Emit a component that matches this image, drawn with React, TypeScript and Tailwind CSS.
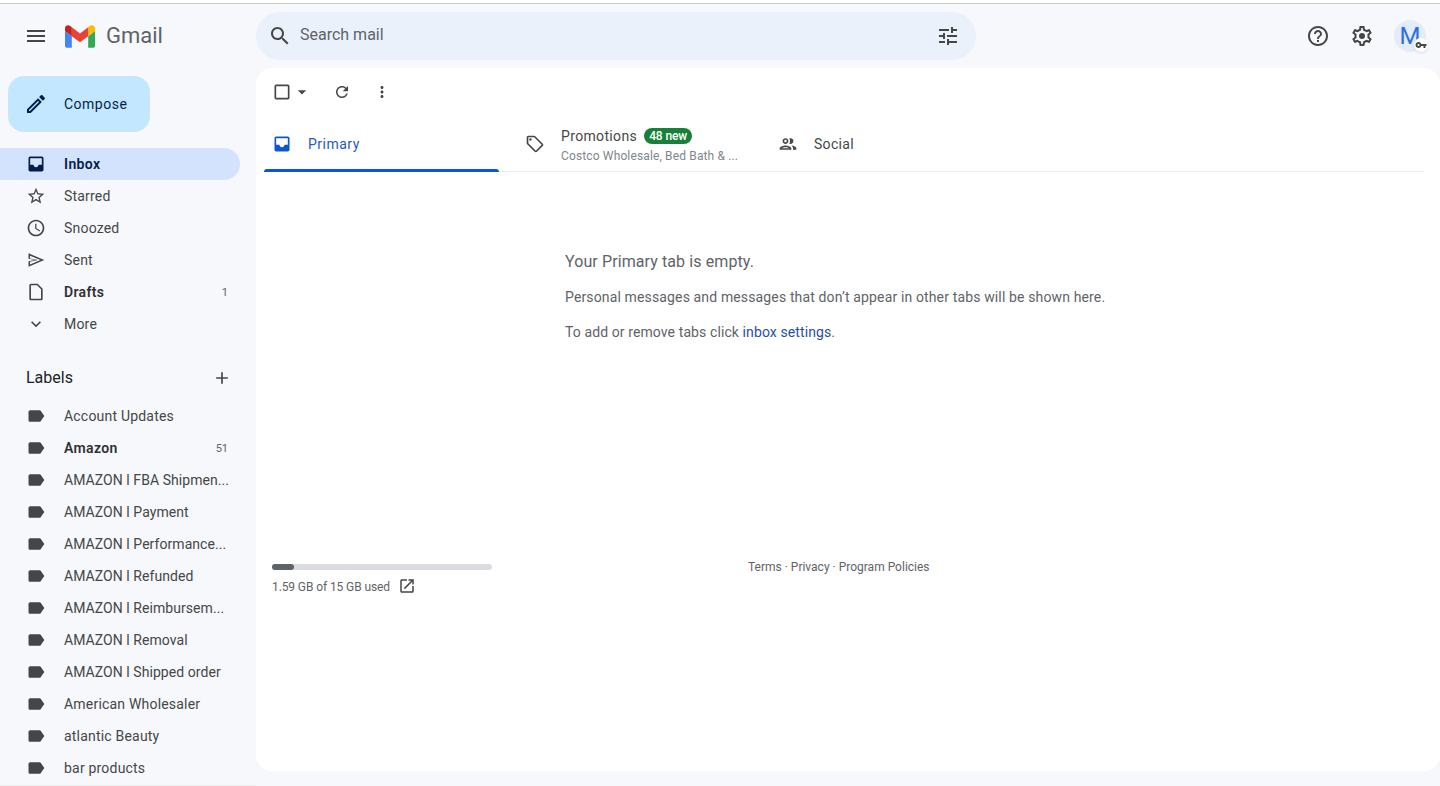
import React from "react";

const ICONS = {
  menu: "M3 18h18v-2H3v2zm0-5h18v-2H3v2zm0-7v2h18V6H3z",
  search: "M15.5 14h-.79l-.28-.27C15.41 12.59 16 11.11 16 9.5 16 5.91 13.09 3 9.5 3S3 5.91 3 9.5 5.91 16 9.5 16c1.61 0 3.09-.59 4.23-1.57l.27.28v.79l5 4.99L20.49 19l-4.99-5zm-6 0C7.01 14 5 11.99 5 9.5S7.01 5 9.5 5 14 7.01 14 9.5 11.99 14 9.5 14z",
  tune: "M3 17v2h6v-2H3zM3 5v2h10V5H3zm10 16v-2h8v-2h-8v-2h-2v6h2zM7 9v2H3v2h4v2h2V9H7zm14 4v-2H11v2h10zm-6-4h2V7h4V5h-4V3h-2v6z",
  help: "M11 18h2v-2h-2v2zm1-16C6.48 2 2 6.48 2 12s4.48 10 10 10 10-4.48 10-10S17.52 2 12 2zm0 18c-4.41 0-8-3.59-8-8s3.59-8 8-8 8 3.59 8 8-3.59 8-8 8zm0-14c-2.21 0-4 1.79-4 4h2c0-1.1.9-2 2-2s2 .9 2 2c0 2-3 1.75-3 5h2c0-2.25 3-2.5 3-5 0-2.21-1.79-4-4-4z",
  settings: "M19.43 12.98c.04-.32.07-.64.07-.98 0-.34-.03-.66-.07-.98l2.11-1.65c.19-.15.24-.42.12-.64l-2-3.46c-.09-.16-.26-.25-.44-.25-.06 0-.12.01-.17.03l-2.49 1c-.52-.4-1.08-.73-1.69-.98l-.38-2.65C14.46 2.18 14.25 2 14 2h-4c-.25 0-.46.18-.49.42l-.38 2.65c-.61.25-1.17.59-1.69.98l-2.49-1c-.06-.02-.12-.03-.18-.03-.17 0-.34.09-.43.25l-2 3.46c-.13.22-.07.49.12.64l2.11 1.65c-.04.32-.07.65-.07.98 0 .33.03.66.07.98l-2.11 1.65c-.19.15-.24.42-.12.64l2 3.46c.09.16.26.25.44.25.06 0 .12-.01.17-.03l2.49-1c.52.4 1.08.73 1.69.98l.38 2.65c.03.24.24.42.49.42h4c.25 0 .46-.18.49-.42l.38-2.65c.61-.25 1.17-.59 1.69-.98l2.49 1c.06.02.12.03.18.03.17 0 .34-.09.43-.25l2-3.46c.12-.22.07-.49-.12-.64l-2.11-1.65zm-1.98-1.71c.04.31.05.52.05.73 0 .21-.02.43-.05.73l-.14 1.13.89.7 1.08.84-.7 1.21-1.27-.51-1.04-.42-.9.68c-.43.32-.84.56-1.25.73l-1.06.43-.16 1.13-.2 1.35h-1.4l-.19-1.35-.16-1.13-1.06-.43c-.43-.18-.83-.41-1.23-.71l-.91-.7-1.06.43-1.27.51-.7-1.21 1.08-.84.89-.7-.14-1.13c-.03-.31-.05-.54-.05-.74s.02-.43.05-.73l.14-1.13-.89-.7-1.08-.84.7-1.21 1.27.51 1.04.42.9-.68c.43-.32.84-.56 1.25-.73l1.06-.43.16-1.13.2-1.35h1.39l.19 1.35.16 1.13 1.06.43c.43.18.83.41 1.23.71l.91.7 1.06-.43 1.27-.51.7 1.21-1.07.85-.89.7.14 1.13zM12 9a3 3 0 1 0 0 6 3 3 0 1 0 0-6z",
  inbox: "M19 3H5c-1.1 0-2 .9-2 2v14c0 1.1.9 2 2 2h14c1.1 0 2-.9 2-2V5c0-1.1-.9-2-2-2zm0 10h-4c0 1.66-1.34 3-3 3s-3-1.34-3-3H5V5h14v8z",
  star: "M22 9.24l-7.19-.62L12 2 9.19 8.63 2 9.24l5.46 4.73L5.82 21 12 17.27 18.18 21l-1.63-7.03L22 9.24zM12 15.4l-3.76 2.27 1-4.28-3.32-2.88 4.38-.38L12 6.1l1.71 4.04 4.38.38-3.32 2.88 1 4.28L12 15.4z",
  clock: "M11.99 2C6.47 2 2 6.48 2 12s4.47 10 9.99 10C17.52 22 22 17.52 22 12S17.52 2 11.99 2zM12 20c-4.42 0-8-3.58-8-8s3.58-8 8-8 8 3.58 8 8-3.58 8-8 8zm.5-13H11v6l5.25 3.15.75-1.23-4.5-2.67z",
  send: "M3 4l19 8-19 8v-6.6l8-1.4-8-1.4V4zm1.8 2.75v3.3l9.6 1.95-9.6 1.95v3.3L17.4 12 4.8 6.75z",
  draft: "M14 2H6c-1.1 0-1.99.9-1.99 2L4 20c0 1.1.89 2 1.99 2H18c1.1 0 2-.9 2-2V8l-6-6zM6 20V4h7.17L18 8.83V20H6z",
  more: "M16.59 8.59L12 13.17 7.41 8.59 6 10l6 6 6-6z",
  add: "M19 13h-6v6h-2v-6H5v-2h6V5h2v6h6v2z",
  label: "M17.63 5.84C17.27 5.33 16.67 5 16 5L5 5.01C3.9 5.01 3 5.9 3 7v10c0 1.1.9 1.99 2 1.99L16 19c.67 0 1.27-.33 1.63-.84L22 12l-4.37-6.16z",
  refresh: "M17.65 6.35C16.2 4.9 14.21 4 12 4c-4.42 0-7.99 3.58-7.99 8s3.57 8 7.99 8c3.73 0 6.84-2.55 7.73-6h-2.08c-.82 2.33-3.04 4-5.65 4-3.31 0-6-2.69-6-6s2.69-6 6-6c1.66 0 3.14.69 4.22 1.78L13 11h7V4l-2.35 2.35z",
  vert: "M12 8c1.1 0 2-.9 2-2s-.9-2-2-2-2 .9-2 2 .9 2 2 2zm0 2c-1.1 0-2 .9-2 2s.9 2 2 2 2-.9 2-2-.9-2-2-2zm0 6c-1.1 0-2 .9-2 2s.9 2 2 2 2-.9 2-2-.9-2-2-2z",
  tag: "M21.41 11.58l-9-9C12.05 2.22 11.55 2 11 2H4c-1.1 0-2 .9-2 2v7c0 .55.22 1.05.59 1.42l9 9c.36.36.86.58 1.41.58s1.05-.22 1.41-.59l7-7c.37-.36.59-.86.59-1.41s-.23-1.06-.59-1.42zM13 20.01L4 11V4h7v-.01l9 9-7 7.02zM6.5 5A1.5 1.5 0 1 0 6.5 8 1.5 1.5 0 1 0 6.5 5z",
  people: "M9 13.75c-2.34 0-7 1.17-7 3.5V19h14v-1.75c0-2.33-4.66-3.5-7-3.5zM4.34 17c.84-.58 2.87-1.25 4.66-1.25s3.82.67 4.66 1.25H4.34zM9 12c1.93 0 3.5-1.57 3.5-3.5S10.93 5 9 5 5.5 6.57 5.5 8.5 7.07 12 9 12zm0-5c.83 0 1.5.67 1.5 1.5S9.83 10 9 10s-1.5-.67-1.5-1.5S8.17 7 9 7zm7.04 6.81c1.16.84 1.96 1.96 1.96 3.44V19h4v-1.75c0-2.02-3.5-3.17-5.96-3.44zM15 12c1.93 0 3.5-1.57 3.5-3.5S16.93 5 15 5c-.54 0-1.04.13-1.5.35.63.89 1 1.98 1 3.15s-.37 2.26-1 3.15c.46.22.96.35 1.5.35z",
  open: "M19 19H5V5h7V3H5c-1.11 0-2 .9-2 2v14c0 1.1.89 2 2 2h14c1.1 0 2-.9 2-2v-7h-2v7zM14 3v2h3.59l-9.83 9.83 1.41 1.41L19 6.41V10h2V3h-7z",
  edit: "M3 17.25V21h3.75L17.81 9.94l-3.75-3.75L3 17.25zM5.92 19H5v-.92l9.06-9.06.92.92L5.92 19zM20.71 7.04c.39-.39.39-1.02 0-1.41l-2.34-2.34c-.2-.2-.45-.29-.71-.29s-.51.1-.7.29l-1.83 1.83 3.75 3.75 1.83-1.83z",
  checkbox: "M19 5v14H5V5h14m0-2H5c-1.1 0-2 .9-2 2v14c0 1.1.9 2 2 2h14c1.1 0 2-.9 2-2V5c0-1.1-.9-2-2-2z",
  drop: "M7 10l5 5 5-5z",
  key: "M12.65 10C11.83 7.67 9.61 6 7 6c-3.31 0-6 2.69-6 6s2.69 6 6 6c2.61 0 4.83-1.67 5.65-4H17v4h4v-4h2v-4H12.65zM7 14c-1.1 0-2-.9-2-2s.9-2 2-2 2 .9 2 2-.9 2-2 2z",
};

function Icon({ name, className }: { name: keyof typeof ICONS; className: string }) {
  return (
    <svg viewBox="0 0 24 24" fill="currentColor" fillRule="evenodd" className={`shrink-0 ${className}`}>
      <path d={ICONS[name]} />
    </svg>
  );
}

function GmailMark() {
  return (
    <svg viewBox="52 42 88 66" className="w-[30px] h-[23px] shrink-0">
      <path fill="#4285f4" d="M58 108h14V74L52 59v43c0 3.32 2.69 6 6 6" />
      <path fill="#34a853" d="M120 108h14c3.32 0 6-2.69 6-6V59l-20 15" />
      <path fill="#fbbc04" d="M120 48v26l20-15v-8c0-7.42-8.47-11.65-14.4-7.2" />
      <path fill="#ea4335" d="M72 74V48l24 18 24-18v26L96 92" />
      <path fill="#c5221f" d="M52 51v8l20 15V48l-5.6-4.2c-5.94-4.45-14.4-.22-14.4 7.2" />
    </svg>
  );
}

const mailboxes: { icon: keyof typeof ICONS; label: string; count?: string; bold?: boolean; active?: boolean }[] = [
  { icon: "inbox", label: "Inbox", bold: true, active: true },
  { icon: "star", label: "Starred" },
  { icon: "clock", label: "Snoozed" },
  { icon: "send", label: "Sent" },
  { icon: "draft", label: "Drafts", bold: true, count: "1" },
  { icon: "more", label: "More" },
];

const labels: { label: string; count?: string; bold?: boolean }[] = [
  { label: "Account Updates" },
  { label: "Amazon", bold: true, count: "51" },
  { label: "AMAZON l FBA Shipmen..." },
  { label: "AMAZON l Payment" },
  { label: "AMAZON l Performance..." },
  { label: "AMAZON l Refunded" },
  { label: "AMAZON l Reimbursem..." },
  { label: "AMAZON l Removal" },
  { label: "AMAZON l Shipped order" },
  { label: "American Wholesaler" },
  { label: "atlantic Beauty" },
  { label: "bar products" },
];

function NavRow({
  icon,
  label,
  count,
  bold,
  active,
}: {
  icon: keyof typeof ICONS;
  label: string;
  count?: string;
  bold?: boolean;
  active?: boolean;
}) {
  return (
    <div
      className={`flex items-center h-8 w-[240px] shrink-0 pl-[26px] pr-[12px] rounded-r-full ${
        active ? "bg-[#d3e3fd] text-[#041e49]" : "text-[#444746]"
      }`}
    >
      <Icon name={icon} className={`w-5 h-5 ${active ? "text-[#041e49]" : "text-[#444746]"}`} />
      <span
        className={`ml-[18px] flex-1 whitespace-nowrap text-sm ${
          label.startsWith("AMAZON") ? "tracking-[0.06px]" : "tracking-[0.2px]"
        } ${bold ? "font-semibold tracking-[0.35px]" : ""} ${bold && !active ? "text-[#303134]" : ""}`}
      >
        {label}
      </span>
      {count && <span className="text-[11px] leading-none pt-px text-[#5f6368]">{count}</span>}
    </div>
  );
}

export default function App() {
  return (
    <div className="h-[786px] w-[1440px] overflow-hidden bg-[#f6f8fc] font-['Roboto',sans-serif] flex flex-col">
      <div className="h-[4px] shrink-0 bg-white border-b border-[#c8c8c8]" />

      {/* Top bar */}
      <header className="h-16 shrink-0 flex items-center">
        <div className="w-[256px] shrink-0 flex items-center pl-6">
          <Icon name="menu" className="w-6 h-6 text-[#444746]" />
          <div className="ml-[17px]">
            <GmailMark />
          </div>
          <span className="ml-[11px] text-[22px] leading-none text-[#5f6368]">Gmail</span>
        </div>
        <div className="w-[720px] h-12 rounded-full bg-[#eaf1fb] flex items-center pl-3 pr-4">
          <Icon name="search" className="w-6 h-6 text-[#444746]" />
          <span className="ml-2 flex-1 text-base text-[#5f6368] pb-[2px]">Search mail</span>
          <Icon name="tune" className="w-6 h-6 text-[#444746]" />
        </div>
        <div className="ml-auto flex items-center pr-3.5">
          <Icon name="help" className="w-6 h-6 text-[#444746]" />
          <Icon name="settings" className="w-6 h-6 text-[#444746] ml-5" />
          <div className="relative ml-[20px] w-8 h-8 rounded-full bg-[#e3ecfa] flex items-center justify-center text-[24px] leading-none text-[#2f6fe0]">
            M
            <div className="absolute -right-[2px] bottom-0 w-[14px] h-[14px] rounded-full bg-white shadow flex items-center justify-center">
              <Icon name="key" className="w-3 h-3 text-[#444746]" />
            </div>
          </div>
        </div>
      </header>

      <div className="flex-1 flex min-h-0">
        {/* Sidebar */}
        <aside className="w-[256px] shrink-0 overflow-hidden flex flex-col border-b border-[#ececec]">
          <div className="ml-2 mt-2 w-[142px] h-14 shrink-0 rounded-2xl bg-[#c2e7ff] flex items-center pl-4 text-[#041e49]">
            <Icon name="edit" className="w-6 h-6" />
            <span className="ml-[16px] text-sm tracking-[0.5px]">Compose</span>
          </div>
          <nav className="mt-4 flex flex-col">
            {mailboxes.map((m) => (
              <NavRow key={m.label} {...m} />
            ))}
          </nav>
          <div className="mt-[22px] h-8 w-[240px] shrink-0 flex items-center justify-between pl-[26px] pr-2">
            <span className="text-base text-[#202124]">Labels</span>
            <Icon name="add" className="w-5 h-5 text-[#444746]" />
          </div>
          <div className="mt-[6px] flex flex-col">
            {labels.map((l) => (
              <NavRow key={l.label} icon="label" {...l} />
            ))}
          </div>
        </aside>

        {/* Main card */}
        <main className="flex-1 h-[703px] bg-white rounded-2xl flex flex-col">
          <div className="h-12 shrink-0 flex items-center pl-4 text-[#444746]">
            <Icon name="checkbox" className="w-5 h-5" />
            <Icon name="drop" className="w-5 h-5" />
            <Icon name="refresh" className="w-[18px] h-[18px] ml-[21px]" />
            <Icon name="vert" className="w-[18px] h-[18px] ml-[22px]" />
          </div>

          <div className="h-14 shrink-0 mx-2 w-[1160px] flex border-b border-[#ebebeb]">
            <div className="relative w-[235px] flex items-center pl-2 text-[#0b57d0]">
              <Icon name="inbox" className="w-5 h-5" />
              <span className="ml-[16px] text-sm tracking-[0.5px] text-[#1f5ac0]">Primary</span>
              <div className="absolute left-0 right-0 -bottom-px h-[3px] bg-[#0b57d0] rounded-t" />
            </div>
            <div className="w-[253px] flex items-center pl-[26px]">
              <Icon name="tag" className="w-5 h-5 text-[#444746]" />
              <div className="ml-4 flex flex-col pt-[2px]">
                <div className="flex items-center">
                  <span className="text-sm text-[#444746] tracking-[0.35px]">Promotions</span>
                  <span className="ml-[7px] h-4 px-[5px] rounded-full bg-[#188038] text-white text-xs font-medium leading-4 tracking-[-0.1px]">
                    48 new
                  </span>
                </div>
                <span className="text-xs text-[#80868b] tracking-[0.14px] mt-[2px]">Costco Wholesale, Bed Bath &amp; ...</span>
              </div>
            </div>
            <div className="flex-1 flex items-center pl-[26px]">
              <Icon name="people" className="w-5 h-5 text-[#444746]" />
              <span className="ml-4 text-sm text-[#444746] tracking-[0.3px]">Social</span>
            </div>
          </div>

          <div className="flex flex-col pl-[309px] pt-[80px] text-[#5f6368]">
            <p className="text-base leading-5 tracking-[0.1px]">Your Primary tab is empty.</p>
            <p className="mt-[15px] text-sm leading-5 tracking-[0.14px]">
              Personal messages and messages that don’t appear in other tabs will be shown here.
            </p>
            <p className="mt-[15px] text-sm leading-5 tracking-[0.1px]">
              To add or remove tabs click <span className="text-[#1f4fa8]">inbox settings</span>.
            </p>
          </div>

          <div className="mt-[222px] flex items-start pl-4">
            <div className="w-[220px] shrink-0">
              <div className="h-[6px] rounded-full bg-[#dadce0]">
                <div className="h-full w-[22px] rounded-full bg-[#5f6368]" />
              </div>
              <div className="mt-[9px] flex items-center text-xs text-[#5f6368] tracking-[-0.1px]">
                <span>1.59 GB of 15 GB used</span>
                <Icon name="open" className="w-[18px] h-[18px] ml-2 -mt-[2px] text-[#444746]" />
              </div>
            </div>
            <div className="ml-[256px] -mt-[5px] text-xs text-[#5f6368]">Terms · Privacy · Program Policies</div>
          </div>
        </main>
      </div>
    </div>
  );
}
